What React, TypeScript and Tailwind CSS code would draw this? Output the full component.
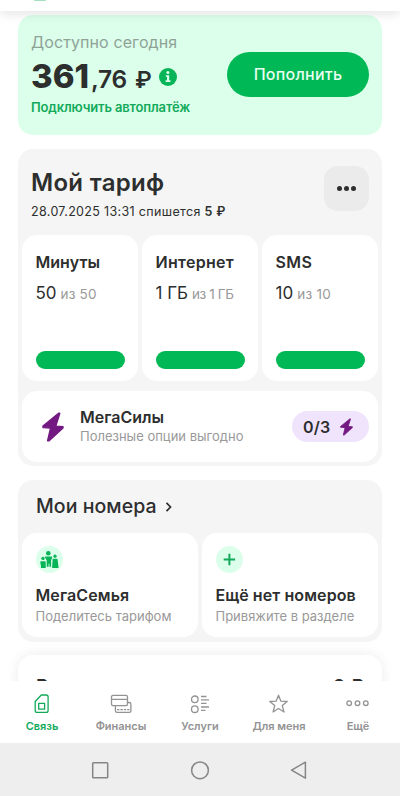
import React from 'react';

interface Quota {
  title: string;
  left: string;
  total: string;
  titleTracking: string;
  totalTracking: string;
}

const quotas: Quota[] = [
  { title: 'Минуты', left: '50', total: 'из 50', titleTracking: 'tracking-[0px]', totalTracking: 'tracking-[0.2px]' },
  { title: 'Интернет', left: '1 ГБ', total: 'из 1 ГБ', titleTracking: 'tracking-[0.3px]', totalTracking: 'tracking-[-0.4px]' },
  { title: 'SMS', left: '10', total: 'из 10', titleTracking: 'tracking-[0.4px]', totalTracking: 'tracking-[0.3px]' },
];

function BoltIcon({ className }: { className: string }) {
  return (
    <svg className={className} viewBox="0 0 22 30" fill="#731982" stroke="#731982" strokeWidth="1.4" strokeLinejoin="round">
      <path d="M16.600 1.300 1 14v1.600l7.600.4L5.600 28.700h1.500L21 16v-1.400l-7.200-.5 4-12.800Z" />
    </svg>
  );
}

function FamilyIcon() {
  return (
    <svg className="w-[27px] h-[27px]" viewBox="0 0 27 27" fill="#07b458">
      <circle cx="13.500" cy="13.500" r="13.500" fill="#dbffea" />
      <circle cx="12.300" cy="7.200" r="2.300" />
      <circle cx="7" cy="12.400" r="1.700" />
      <circle cx="19" cy="10.200" r="1.600" />
      <path d="M4.400 15.200h4.200c.8 0 1.100.4 1.100 1.100v5.600H4.900v-3.400h-.5Z" />
      <path d="M9.600 10.500h5.800c.6 0 .9.3.8.900l-1.100 3.100v6.300h-1.700v-3h-.8v3h-1.900v-6.400l-1.600-3c-.2-.5 0-.9.500-.9Z" />
      <path d="M17.200 12.800h3.700c.4 0 .6.2.7.600l1 8.500h-6.500l.5-8.400c0-.4.2-.7.600-.7Z" />
    </svg>
  );
}

function PlusIcon() {
  return (
    <svg className="w-[27px] h-[27px]" viewBox="0 0 27 27" fill="none">
      <circle cx="13.500" cy="13.500" r="13.500" fill="#dbffea" />
      <path d="M13.400 7.800v11.400M7.700 13.500h11.400" stroke="#12aa5a" strokeWidth="2" />
    </svg>
  );
}

const navItems = [
  {
    label: 'Связь',
    active: true,
    icon: (
      <>
        <path d="M11.300 3h4.900c1.200 0 1.900.7 1.900 1.900v13.600c0 1.200-.7 1.900-1.900 1.900H7.100c-1.200 0-1.900-.7-1.900-1.900V9.500Z" />
        <path d="M8.700 11.300h5.900v5.900H8.700Z" />
      </>
    ),
  },
  {
    label: 'Финансы',
    active: false,
    icon: (
      <>
        <rect x="2.500" y="3.300" width="16" height="10.400" rx="1.600" />
        <path d="M2.500 7.300h16M18.500 10.500h1.800c1.100 0 1.600.5 1.600 1.600v6.700c0 1.100-.5 1.600-1.600 1.600H8c-1.100 0-1.600-.5-1.600-1.600v-5.100" />
        <path d="M8 17.600h12.500" strokeDasharray="2.400 1" />
      </>
    ),
  },
  {
    label: 'Услуги',
    active: false,
    icon: (
      <>
        <circle cx="6.800" cy="7.300" r="3.300" />
        <circle cx="6.800" cy="17.200" r="3.300" />
        <path d="M13 4.500h5.500M13 7.900h8M13 11.300h5.500M13 15h8M13 18.400h4.500" />
      </>
    ),
  },
  {
    label: 'Для меня',
    active: false,
    icon: <path d="m11.500 3.200 2.400 6 6.300.3-4.900 4.100 1.700 6.400-5.500-3.500L6.100 20l1.600-6.400-4.900-4.100 6.300-.3Z" />,
  },
  {
    label: 'Ещё',
    active: false,
    icon: (
      <>
        <circle cx="3.200" cy="11.200" r="2.300" />
        <circle cx="11.500" cy="11.200" r="2.300" />
        <circle cx="19.800" cy="11.200" r="2.300" />
      </>
    ),
  },
];

function BalanceCard() {
  return (
    <section className="mx-[18px] mt-1 h-[120px] rounded-[15px] bg-[#dbffea] pl-[13px] pr-[13px] flex justify-between">
      <div className="pt-[17px] flex flex-col">
        <p className="text-[16px] leading-5 tracking-[0.1px] text-[#8fa297]">Доступно сегодня</p>
        <div className="mt-[8px] h-8 flex items-baseline leading-8 text-[#2d2e2e]">
          <span className="w-[60px] text-[33px] font-extrabold tracking-[0px]">361</span>
          <span className="w-[44px] text-[24.500px] font-semibold tracking-[-0.2px]">,76</span>
          <span className="w-[24px] text-[23px] font-semibold">₽</span>
          <svg className="mt-px w-[18px] h-[18px] self-center" viewBox="0 0 18 18">
            <circle cx="9" cy="9" r="9" fill="#07b458" />
            <circle cx="8.900" cy="4.500" r="1.500" fill="#dbffea" />
            <path d="M6.800 7.200h3.400v5.100h1.300v1.600H6.600v-1.600h1.400V8.800H6.800Z" fill="#dbffea" />
          </svg>
        </div>
        <a className="mt-[7px] text-[13px] leading-4 font-semibold tracking-[-0.15px] whitespace-nowrap text-[#12aa5a]">
          Подключить автоплатёж
        </a>
      </div>
      <button className="mt-[37px] w-[142px] h-[45px] shrink-0 rounded-full bg-[#00b956] pb-px text-[16px] font-medium tracking-[0.25px] text-[#e6fff0]">
        Пополнить
      </button>
    </section>
  );
}

function QuotaCard({ title, left, total, titleTracking, totalTracking }: Quota) {
  return (
    <div className="h-[146px] rounded-[15px] bg-white px-[13.500px] pt-[17px] flex flex-col">
      <h3 className={`text-[16px] leading-5 font-semibold text-[#2d2e2e] ${titleTracking}`}>{title}</h3>
      <p className="mt-[11px] leading-5 text-[17px] whitespace-nowrap text-[#2d2e2e]">
        {left}
        <span className={`ml-1 text-[13.500px] text-[#999] ${totalTracking}`}>{total}</span>
      </p>
      <div className="mt-[47px] h-[18px] rounded-full bg-[#00b956]" />
    </div>
  );
}

function TariffCard() {
  return (
    <section className="mx-[18px] mt-[14px] h-[317px] rounded-[15px] bg-[#f5f5f5] px-1">
      <div className="h-[86px] pl-[9px] pr-[9px] flex justify-between">
        <div className="pt-5">
          <h2 className="text-[24px] leading-7 font-semibold tracking-[0.3px] text-[#2d2e2e]">Мой тариф</h2>
          <p className="mt-[7px] text-[12.500px] leading-4 tracking-[0.340px] text-[#2d2e2e]">
            28.07.2025 13:31 спишется <b className="font-semibold">5 ₽</b>
          </p>
        </div>
        <button className="mt-[17px] w-[45px] h-[45px] rounded-[14px] bg-[#ebebeb] flex items-center justify-center gap-[2px]">
          <i className="w-[5px] h-[5px] rounded-full bg-[#2d2e2e]" />
          <i className="w-[5px] h-[5px] rounded-full bg-[#2d2e2e]" />
          <i className="w-[5px] h-[5px] rounded-full bg-[#2d2e2e]" />
        </button>
      </div>
      <div className="grid grid-cols-3 gap-1">
        {quotas.map((quota) => (
          <QuotaCard key={quota.title} {...quota} />
        ))}
      </div>
      <div className="mt-[10px] h-[71px] rounded-[15px] bg-white pl-5 pr-[9px] flex items-center">
        <BoltIcon className="w-[22px] h-[30px]" />
        <div className="ml-[16px]">
          <h3 className="text-[16px] leading-5 font-semibold text-[#2d2e2e]">МегаСилы</h3>
          <p className="text-[13px] leading-[19px] text-[#999]">Полезные опции выгодно</p>
        </div>
        <div className="ml-auto w-[77px] h-[31px] rounded-full bg-[#f0e4fd] pl-[11px] flex items-center">
          <span className="w-[37px] text-[16px] font-semibold tracking-[0.2px] text-[#2d2e2e]">0/3</span>
          <BoltIcon className="w-[13px] h-[18px]" />
        </div>
      </div>
    </section>
  );
}

function NumberCard({ icon, title, text }: { icon: React.ReactNode; title: string; text: string }) {
  return (
    <div className="h-[104px] rounded-[15px] bg-white px-[13.500px] pt-[13px]">
      {icon}
      <h3 className="mt-[12px] text-[16px] leading-5 font-semibold tracking-[0.1px] whitespace-nowrap text-[#2d2e2e]">{title}</h3>
      <p className="mt-[2px] text-[13px] leading-[18px] whitespace-nowrap text-[#999]">{text}</p>
    </div>
  );
}

function NumbersCard() {
  return (
    <section className="mx-[18px] mt-[14px] h-[162px] rounded-[15px] bg-[#f5f5f5] px-1">
      <div className="h-[53px] pl-[14px] flex items-center">
        <h2 className="pt-px text-[19.500px] font-medium tracking-[0.05px] text-[#2d2e2e]">Мои номера</h2>
        <svg className="ml-2 w-[7px] h-[10px]" viewBox="0 0 7 10" fill="none" stroke="#2d2e2e" strokeWidth="1.700">
          <path d="m1.500.8 4 4.200-4 4.200" />
        </svg>
      </div>
      <div className="grid grid-cols-2 gap-1">
        <NumberCard icon={<FamilyIcon />} title="МегаСемья" text="Поделитесь тарифом" />
        <NumberCard icon={<PlusIcon />} title="Ещё нет номеров" text="Привяжите в разделе" />
      </div>
    </section>
  );
}

export default function App() {
  return (
    <div className="w-[400px] h-[796px] overflow-hidden bg-white flex flex-col font-['Inter','Liberation_Sans',sans-serif]">
      <header className="relative z-10 h-[11px] shrink-0 bg-white shadow-[0_2px_12px_rgba(0,0,0,0.13)]">
        <div className="ml-[34px] w-3 h-px rounded-b-full bg-[#9fdfc0]" />
      </header>

      <main className="h-[670px] shrink-0 overflow-hidden">
        <BalanceCard />
        <TariffCard />
        <NumbersCard />
        {/* Only the top of this card is visible above the tab bar */}
        <section className="mx-[18px] mt-[13px] h-[80px] rounded-[15px] bg-white shadow-[0_0_14px_rgba(0,0,0,0.08)] px-[18px] pt-[18px] flex justify-between text-[19px] leading-7 font-semibold text-[#2d2e2e]">
          <span>Расходы</span>
          <span>0 ₽</span>
        </section>
      </main>

      <nav className="relative h-[62px] shrink-0 bg-white px-[2.500px] grid grid-cols-5">
        {navItems.map((item) => (
          <a
            key={item.label}
            className={`pt-[11px] flex flex-col items-center ${item.active ? 'text-[#12aa5a]' : 'text-[#939393]'}`}
          >
            <svg className="w-6 h-6" viewBox="0 0 24 24" fill="none" stroke="currentColor" strokeWidth="1.300" strokeLinejoin="round">
              {item.icon}
            </svg>
            <span className="mt-[2px] text-[11px] leading-4 font-semibold whitespace-nowrap">{item.label}</span>
          </a>
        ))}
      </nav>

      <footer className="h-[53px] shrink-0 bg-[#eee] flex items-center justify-center gap-[76px]">
        <svg className="w-6 h-6" viewBox="0 0 24 24" fill="none" stroke="#858585" strokeWidth="1.500">
          <rect x="4.700" y="4.700" width="15" height="15" rx="0.800" />
        </svg>
        <svg className="w-6 h-6" viewBox="0 0 24 24" fill="none" stroke="#858585" strokeWidth="1.500">
          <circle cx="12" cy="12.300" r="8.400" />
        </svg>
        <svg className="w-6 h-6" viewBox="0 0 24 24" fill="none" stroke="#858585" strokeWidth="1.500" strokeLinejoin="round">
          <path d="M17.400 4.200v16L3.600 12.200Z" />
        </svg>
      </footer>
    </div>
  );
}
